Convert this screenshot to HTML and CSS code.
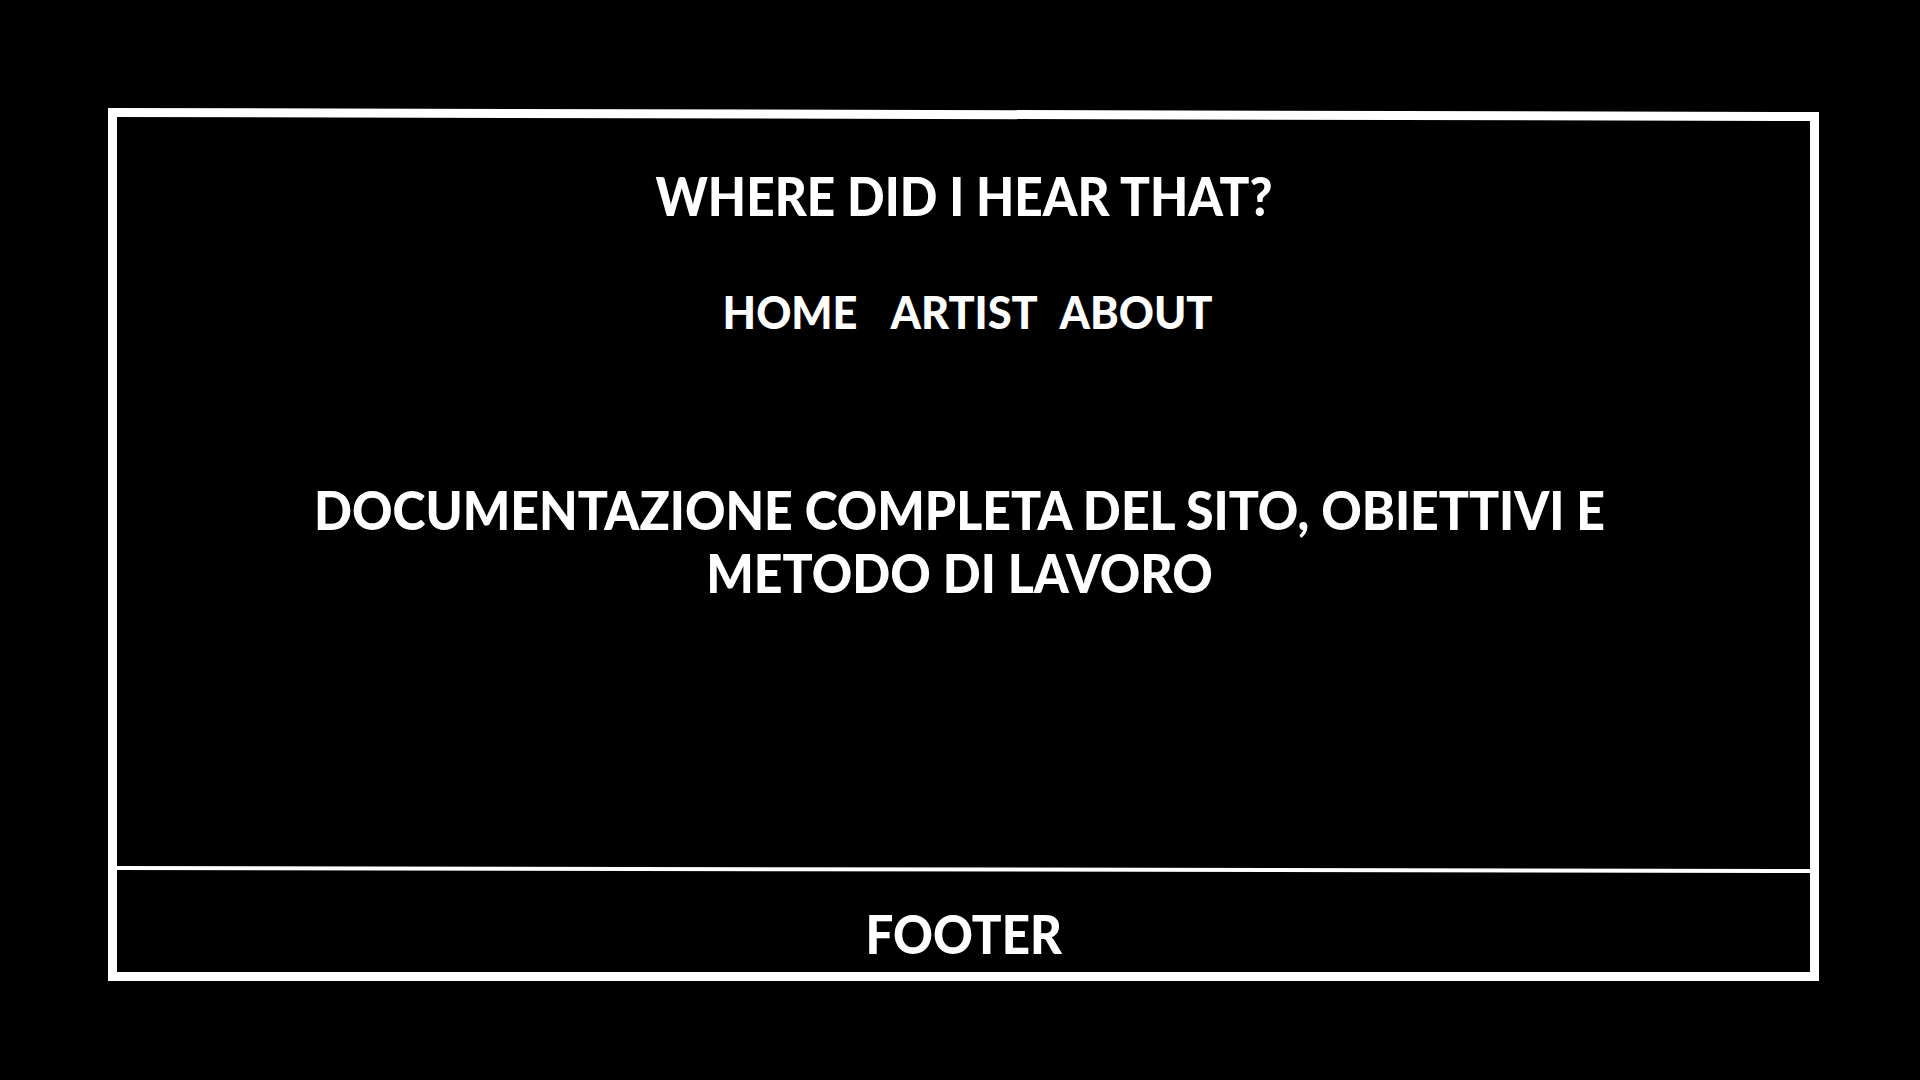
FILE: index.html
```html
<!DOCTYPE html>
<html lang="it">
<head>
<meta charset="utf-8">
<title>Where did I hear that?</title>
<link rel="stylesheet" href="styles.css">
</head>
<body>
<div class="frame">
  <header class="header">
    <h1 class="title">WHERE DID I HEAR THAT?</h1>
    <nav class="nav">
      <a class="nav-link nav-home" href="#">HOME</a>
      <a class="nav-link nav-artist" href="#">ARTIST</a>
      <a class="nav-link" href="#">ABOUT</a>
    </nav>
  </header>
  <main class="main">
    <h2 class="lead">DOCUMENTAZIONE COMPLETA DEL SITO, OBIETTIVI E<br>METODO DI LAVORO</h2>
  </main>
  <div class="divider"></div>
  <footer class="footer">
    <p class="footer-text">FOOTER</p>
  </footer>
</div>
</body>
</html>
```
FILE: styles.css
```css
* { box-sizing: border-box; }
html, body { margin: 0; padding: 0; background: #000; }
body {
  width: 1920px;
  height: 1080px;
  overflow: hidden;
  font-family: "Lato", "Liberation Sans", sans-serif;
  font-weight: 900;
  color: #fff;
}
.frame {
  position: relative;
  margin: 108px 0 0 108px;
  width: 1711px;
  height: 873px;
  border: 9px solid #fff;
  border-top: 0;
  border-right: 0;
  padding-top: 9px;
  padding-right: 9px;
  display: flex;
  flex-direction: column;
}
.frame::before {
  content: "";
  position: absolute;
  top: 0;
  left: -9px;
  right: 0;
  height: 9px;
  background: #fff;
  transform-origin: left top;
  transform: rotate(0.134deg);
}
.frame::after {
  content: "";
  position: absolute;
  top: 4px;
  right: 0;
  bottom: -9px;
  width: 9px;
  background: #fff;
}
.header {
  display: flex;
  flex-direction: column;
  align-items: center;
  padding-top: 52px;
}
.title {
  margin: 0;
  font-size: 53px;
  line-height: 53px;
  font-weight: 900;
  transform: scaleX(0.935);
}
.nav {
  display: flex;
  margin-top: 67px;
  padding-left: 8px;
  transform: scaleX(0.943);
}
.nav-link {
  color: #fff;
  text-decoration: none;
  font-size: 46px;
  line-height: 46px;
}
.nav-home { margin-right: 35px; }
.nav-artist { margin-right: 23px; }
.main {
  flex: 1;
  display: flex;
  justify-content: center;
  padding-top: 143px;
  padding-right: 7px;
}
.lead {
  margin: 0;
  text-align: center;
  font-size: 53px;
  line-height: 63px;
  font-weight: 900;
  transform: scaleX(0.943);
}
.divider {
  height: 4px;
  background: #fff;
  transform-origin: left center;
  transform: rotate(0.1deg);
}
.footer {
  height: 102px;
  display: flex;
  justify-content: center;
  padding-top: 37px;
}
.footer-text {
  margin: 0;
  font-size: 53px;
  line-height: 53px;
  transform: scaleX(0.93);
}
```
